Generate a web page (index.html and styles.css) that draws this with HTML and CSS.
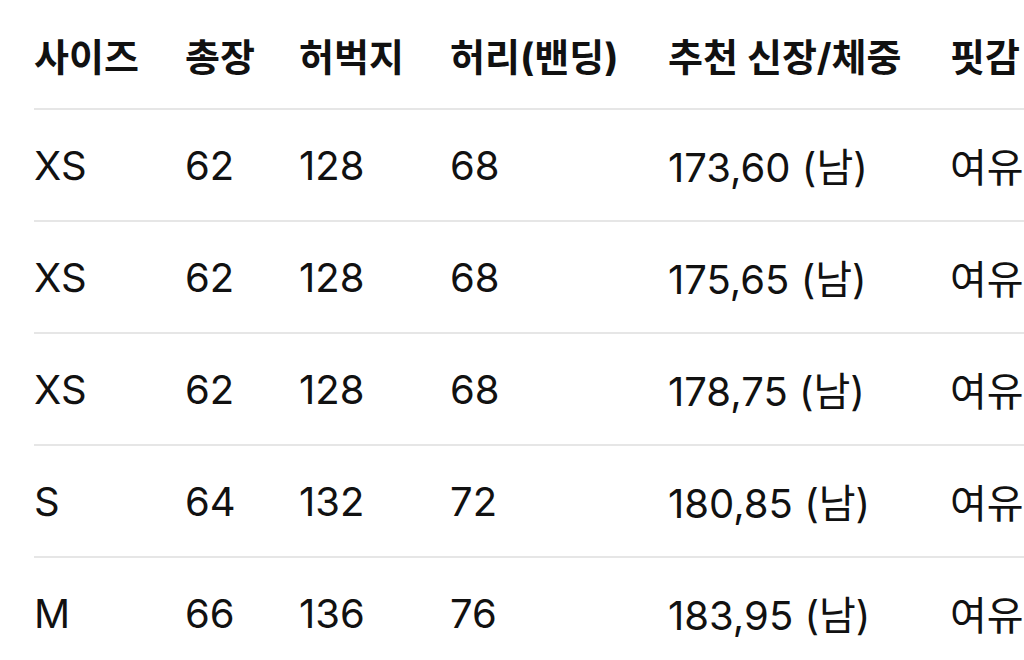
FILE: index.html
```html
<!DOCTYPE html>
<html lang="ko">
<head>
<meta charset="utf-8">
<link rel="stylesheet" href="styles.css">
</head>
<body>
<table class="size-table">
  <colgroup>
    <col class="c-size"><col class="c-len"><col class="c-thigh"><col class="c-waist"><col class="c-rec"><col class="c-fit">
  </colgroup>
  <thead>
    <tr><th>사이즈</th><th>총장</th><th>허벅지</th><th>허리(밴딩)</th><th>추천 신장/체중</th><th>핏감</th></tr>
  </thead>
  <tbody>
    <tr><td>XS</td><td>62</td><td>128</td><td>68</td><td>173,60 (남)</td><td>여유</td></tr>
    <tr><td>XS</td><td>62</td><td>128</td><td>68</td><td>175,65 (남)</td><td>여유</td></tr>
    <tr><td>XS</td><td>62</td><td>128</td><td>68</td><td>178,75 (남)</td><td>여유</td></tr>
    <tr><td>S</td><td>64</td><td>132</td><td>72</td><td>180,85 (남)</td><td>여유</td></tr>
    <tr><td>M</td><td>66</td><td>136</td><td>76</td><td>183,95 (남)</td><td>여유</td></tr>
  </tbody>
</table>
</body>
</html>
```

FILE: styles.css
```css
html, body {
  margin: 0;
  padding: 0;
  background: #ffffff;
  overflow: hidden;
}
body {
  width: 1024px;
  height: 660px;
  font-family: "Inter", "Noto Sans CJK KR", sans-serif;
  color: #111111;
}
.size-table {
  margin-left: 34px;
  border-collapse: collapse;
  table-layout: fixed;
  width: 1100px;
}
.c-size { width: 151px; }
.c-len { width: 114px; }
.c-thigh { width: 151px; }
.c-waist { width: 218px; }
.c-rec { width: 282px; }
.c-fit { width: 184px; }
.size-table th,
.size-table td {
  padding: 0;
  text-align: left;
  vertical-align: middle;
  white-space: nowrap;
  border-bottom: 2px solid #e6e6e6;
}
.size-table th {
  height: 108px;
  font-size: 38px;
  font-weight: 700;
}
.size-table td {
  height: 110px;
  font-size: 40px;
  font-weight: 400;
}
```
